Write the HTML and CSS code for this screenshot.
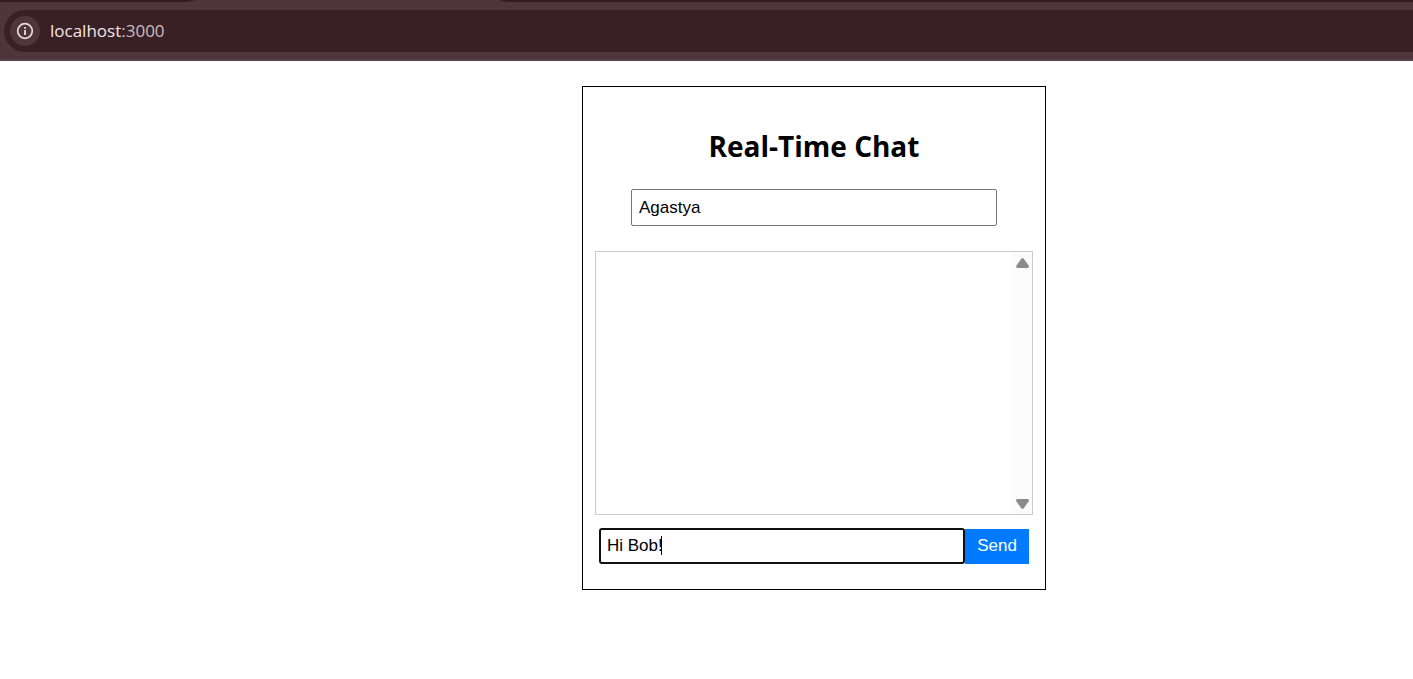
FILE: index.html
```html
<!DOCTYPE html>
<html lang="en">
<head>
<meta charset="utf-8">
<title>Real-Time Chat</title>
<link rel="stylesheet" href="styles.css">
</head>
<body>
<header class="browser">
  <div class="tab-strip">
    <svg class="tab" width="326" height="2" viewBox="0 0 326 2" aria-hidden="true"><path d="M0 2Q6 2 10 0H315Q319 2 326 2Z" fill="#50353a"/></svg>
  </div>
  <div class="toolbar">
    <div class="address-bar">
      <button class="site-info" type="button" aria-label="View site information">
        <svg width="18" height="18" viewBox="0 0 18 18" aria-hidden="true"><circle cx="9" cy="9" r="7.3" fill="none" stroke="#eadcde" stroke-width="1.7"/><path d="M8.1 8h1.8v5H8.1zM8.1 5h1.8v1.8H8.1z" fill="#eadcde"/></svg>
      </button>
      <span class="host">localhost<span class="port">:3000</span></span>
    </div>
  </div>
</header>
<main class="page">
  <section class="chat">
    <h2 class="title">Real-Time Chat</h2>
    <input class="field name-field" type="text" value="Agastya" aria-label="Your name">
    <div class="messages">
      <div class="scrollbar">
        <svg width="13" height="10" viewBox="0 0 13 10" aria-hidden="true"><path d="M5.3.7Q6.5-.5 7.7.7L12.6 7.6Q13.4 10 11.6 10H1.4Q-.4 10 .4 7.6Z" fill="#8b8b8b"/></svg>
        <svg width="13" height="10" viewBox="0 0 13 10" aria-hidden="true"><path d="M5.3 9.3Q6.5 10.5 7.7 9.3L12.6 2.4Q13.4 0 11.6 0H1.4Q-.4 0 .4 2.4Z" fill="#8b8b8b"/></svg>
      </div>
    </div>
    <form class="composer">
      <div class="entry">
        <input class="field message-field" type="text" value="Hi Bob!" aria-label="Message">
        <span class="caret"></span>
      </div>
      <button class="send" type="button">Send</button>
    </form>
  </section>
</main>
</body>
</html>
```
FILE: styles.css
```css
* {
  box-sizing: border-box;
}

body {
  margin: 0;
  background: #fff;
  color: #000;
  font-family: "Liberation Sans", Arial, sans-serif;
}

.tab-strip {
  display: flex;
  height: 2px;
  padding-left: 185px;
  background: #331a20;
}

.tab {
  display: block;
}

.toolbar {
  padding: 8px 0 7px 4px;
  background: #50353a;
  border-bottom: 2px solid #534346;
}

.address-bar {
  display: flex;
  align-items: center;
  gap: 10px;
  height: 42px;
  padding-left: 6px;
  border-radius: 21px 0 0 21px;
  background: #392025;
}

.site-info {
  display: flex;
  align-items: center;
  justify-content: center;
  width: 30px;
  height: 30px;
  padding: 0;
  border: 0;
  border-radius: 50%;
  background: #50353a;
}

.host {
  color: #f3e6e8;
  font: 17px/24px "Open Sans", "Noto Sans", sans-serif;
}

.port {
  color: #cdbcbf;
}

.page {
  display: flex;
  justify-content: center;
  padding: 25px 0 0 215px;
}

.chat {
  display: flex;
  flex-direction: column;
  align-items: center;
  width: 464px;
  padding: 39px 12px 25px;
  border: 1px solid #000;
}

.title {
  margin: 0 0 23px;
  font: 700 28px/40px "Open Sans", "Noto Sans", sans-serif;
}

.field {
  width: 366px;
  padding: 0 7px;
  background: #fff;
  color: #000;
  font: 17px/20px "Liberation Sans", Arial, sans-serif;
}

.name-field {
  height: 37px;
  border: 1px solid #767676;
  border-radius: 2px;
}

.messages {
  display: flex;
  justify-content: flex-end;
  width: 100%;
  height: 264px;
  margin: 25px 0 13px;
  border: 1px solid #ccc;
}

.scrollbar {
  display: flex;
  flex-direction: column;
  align-items: center;
  justify-content: space-between;
  width: 19px;
  padding: 6px 0 5px;
  background: #fbfbfb;
}

.composer {
  display: flex;
  align-items: flex-end;
}

.entry {
  position: relative;
  display: flex;
}

.message-field {
  height: 36px;
  padding: 0 6px;
  border: 2px solid #101010;
  border-radius: 3px;
  outline: none;
}

.caret {
  position: absolute;
  top: 8px;
  left: 62px;
  width: 1px;
  height: 19px;
  background: #000;
}

.send {
  width: 64px;
  height: 35px;
  padding: 0 0 2px;
  border: 0;
  background: #007bff;
  color: #fff;
  font: 17px/20px "Liberation Sans", Arial, sans-serif;
}
```
